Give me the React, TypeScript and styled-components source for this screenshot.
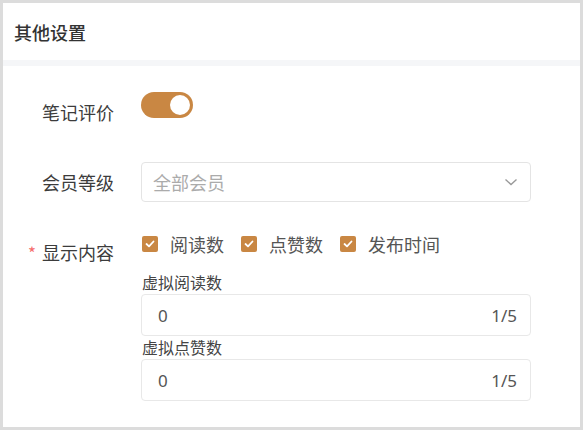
import React from 'react';
import styled, { createGlobalStyle } from 'styled-components';

const GlobalStyle = createGlobalStyle`
  html, body {
    margin: 0;
    padding: 0;
    background: #dcdcdc;
  }
  body {
    font-family: "Noto Sans CJK SC", "Noto Sans", sans-serif;
  }
`;

const Page = styled.div`
  padding: 3px;
  width: 583px;
  height: 430px;
  box-sizing: border-box;
`;

const Card = styled.div`
  background: #fff;
  width: 577px;
  height: 424px;
  display: flex;
  flex-direction: column;
`;

const Header = styled.div`
  height: 57px;
  padding-left: 11px;
  display: flex;
  align-items: center;
  font-size: 18px;
  font-weight: 500;
  color: #333;
  border-bottom: 6px solid #f5f6f8;
`;

const Form = styled.div`
  padding: 26px 49px 0 0;
  display: flex;
  flex-direction: column;
  gap: 30px;
`;

const Row = styled.div`
  display: flex;
  align-items: flex-start;
`;

const Label = styled.div<{ $required?: boolean }>`
  width: 111px;
  flex: none;
  text-align: right;
  font-size: 18px;
  line-height: 40px;
  color: #3c3c3c;

  &::before {
    content: ${(p) => (p.$required ? "'*'" : 'none')};
    color: #f56c6c;
    font-size: 17px;
    margin-right: 6px;
  }
`;

const Control = styled.div`
  margin-left: 27px;
  width: 390px;
  display: flex;
  flex-direction: column;
`;

const Switch = styled.div<{ $on: boolean }>`
  width: 52px;
  height: 26px;
  border-radius: 13px;
  background: ${(p) => (p.$on ? '#c98743' : '#dcdfe6')};
  position: relative;

  &::after {
    content: '';
    position: absolute;
    top: 3px;
    left: ${(p) => (p.$on ? '29px' : '3px')};
    width: 20px;
    height: 20px;
    border-radius: 50%;
    background: #fff;
  }
`;

const Select = styled.div`
  height: 40px;
  box-sizing: border-box;
  border: 1px solid #e4e4e4;
  border-radius: 4px;
  padding: 0 12px 0 11px;
  display: flex;
  align-items: center;
  justify-content: space-between;
  font-size: 18px;
  color: #ababab;
`;

const CheckGroup = styled.div`
  display: flex;
  align-items: center;
  height: 24px;
  margin-bottom: 15px;
`;

const CheckItem = styled.label`
  display: flex;
  align-items: center;
  margin-left: 1px;
  margin-right: 16px;
  font-size: 18px;
  color: #555;
`;

const Box = styled.span`
  width: 16px;
  height: 16px;
  border-radius: 2px;
  background: #c98743;
  display: inline-flex;
  align-items: center;
  justify-content: center;
  margin-right: 12px;
`;

const FieldLabel = styled.div`
  font-size: 16px;
  line-height: 23px;
  color: #444;
  padding-left: 1px;
`;

const Input = styled.div`
  height: 42px;
  box-sizing: border-box;
  border: 1px solid #e8e8e8;
  border-radius: 4px;
  padding: 0 13px 0 16px;
  display: flex;
  align-items: center;
  justify-content: space-between;
  font-size: 17px;
  color: #555;
`;

const Count = styled.span`
  font-family: "Noto Sans", sans-serif;
  color: #555;
`;

function Check({ label }: { label: string }) {
  return (
    <CheckItem>
      <Box>
        <svg width="10" height="8" viewBox="0 0 10 8">
          <polyline
            points="1.5,4 4,6.3 8.5,1.5"
            fill="none"
            stroke="#fff"
            strokeWidth="1.8"
            strokeLinecap="round"
            strokeLinejoin="round"
          />
        </svg>
      </Box>
      {label}
    </CheckItem>
  );
}

function Field({ label, value }: { label: string; value: string }) {
  return (
    <>
      <FieldLabel>{label}</FieldLabel>
      <Input>
        <Count>{value}</Count>
        <Count>1/5</Count>
      </Input>
    </>
  );
}

export default function App() {
  return (
    <Page>
      <GlobalStyle />
      <Card>
        <Header>其他设置</Header>
        <Form>
          <Row>
            <Label>笔记评价</Label>
            <Control>
              <Switch $on />
            </Control>
          </Row>
          <Row>
            <Label>会员等级</Label>
            <Control>
              <Select>
                全部会员
                <svg width="14" height="8" viewBox="0 0 14 8">
                  <polyline
                    points="1.5,1.5 7,6.5 12.5,1.5"
                    fill="none"
                    stroke="#999"
                    strokeWidth="1.4"
                  />
                </svg>
              </Select>
            </Control>
          </Row>
          <Row>
            <Label $required>显示内容</Label>
            <Control>
              <CheckGroup>
                <Check label="阅读数" />
                <Check label="点赞数" />
                <Check label="发布时间" />
              </CheckGroup>
              <Field label="虚拟阅读数" value="0" />
              <Field label="虚拟点赞数" value="0" />
            </Control>
          </Row>
        </Form>
      </Card>
    </Page>
  );
}
